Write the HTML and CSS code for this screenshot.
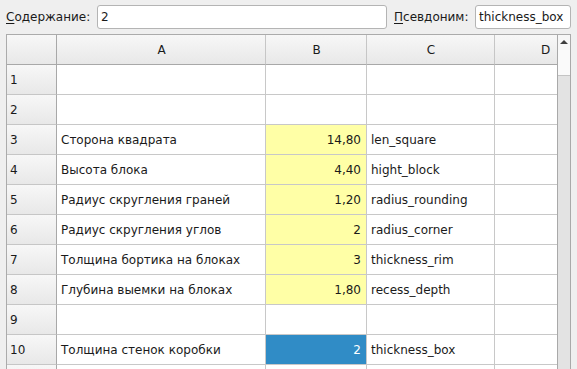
FILE: index.html
```html
<!DOCTYPE html>
<html>
<head>
<meta charset="utf-8">
<link rel="stylesheet" href="styles.css">
</head>
<body>
<div class="toolbar">
  <label class="lbl lbl-content"><u>С</u>одержание:</label>
  <div class="field field-content">2</div>
  <label class="lbl lbl-alias"><u>П</u>севдоним:</label>
  <div class="field field-alias">thickness_box</div>
</div>
<div class="sheet">
  <div class="grid">
    <div class="row head">
      <div class="cell corner"></div>
      <div class="cell colh">A</div>
      <div class="cell colh">B</div>
      <div class="cell colh">C</div>
      <div class="cell colh">D</div>
    </div>
    <div class="row"><div class="cell rowh">1</div><div class="cell"></div><div class="cell"></div><div class="cell"></div><div class="cell"></div></div>
    <div class="row"><div class="cell rowh">2</div><div class="cell"></div><div class="cell"></div><div class="cell"></div><div class="cell"></div></div>
    <div class="row"><div class="cell rowh">3</div><div class="cell">Сторона квадрата</div><div class="cell num alias">14,80</div><div class="cell">len_square</div><div class="cell"></div></div>
    <div class="row"><div class="cell rowh">4</div><div class="cell">Высота блока</div><div class="cell num alias">4,40</div><div class="cell">hight_block</div><div class="cell"></div></div>
    <div class="row"><div class="cell rowh">5</div><div class="cell">Радиус скругления граней</div><div class="cell num alias">1,20</div><div class="cell">radius_rounding</div><div class="cell"></div></div>
    <div class="row"><div class="cell rowh">6</div><div class="cell">Радиус скругления углов</div><div class="cell num alias">2</div><div class="cell">radius_corner</div><div class="cell"></div></div>
    <div class="row"><div class="cell rowh">7</div><div class="cell">Толщина бортика на блоках</div><div class="cell num alias">3</div><div class="cell">thickness_rim</div><div class="cell"></div></div>
    <div class="row"><div class="cell rowh">8</div><div class="cell">Глубина выемки на блоках</div><div class="cell num alias">1,80</div><div class="cell">recess_depth</div><div class="cell"></div></div>
    <div class="row"><div class="cell rowh">9</div><div class="cell"></div><div class="cell"></div><div class="cell"></div><div class="cell"></div></div>
    <div class="row"><div class="cell rowh">10</div><div class="cell">Толщина стенок коробки</div><div class="cell num selected">2</div><div class="cell">thickness_box</div><div class="cell"></div></div>
    <div class="row"><div class="cell rowh"></div><div class="cell"></div><div class="cell"></div><div class="cell"></div><div class="cell"></div></div>
  </div>
  <div class="vscroll">
    <div class="sb-up"><span class="arrow"></span></div>
    <div class="sb-thumb"></div>
    <div class="sb-track"></div>
  </div>
</div>
</body>
</html>
```
FILE: styles.css
```css
html, body {
  margin: 0;
  padding: 0;
  background: #efefef;
  overflow: hidden;
  width: 577px;
  height: 369px;
  font-family: "DejaVu Sans", sans-serif;
  font-size: 12px;
  color: #1a1a1a;
}
u { text-decoration: underline; text-underline-offset: 2px; }

.toolbar {
  display: flex;
  align-items: center;
  padding: 5px 6px 0 6px;
  height: 24px;
}
.lbl {
  flex: none;
  white-space: nowrap;
}
.lbl-content { width: 91px; }
.lbl-alias { width: 81px; margin-left: 7px; }
.field {
  box-sizing: border-box;
  height: 24px;
  background: #fff;
  border: 1px solid #b4b4b4;
  border-radius: 3px;
  padding: 0 3px;
  line-height: 22px;
  white-space: nowrap;
  overflow: hidden;
}
.field-content { flex: 1; }
.field-alias { width: 96px; flex: none; }

.sheet {
  display: flex;
  margin: 5px 6px 0 6px;
  height: 340px;
  border-top: 1px solid #ababab;
  border-left: 1px solid #ababab;
}
.grid {
  flex: 1;
  overflow: hidden;
  background: #fff;
}
.row {
  display: grid;
  grid-template-columns: 50px 209px 101px 128px 101px;
  height: 30px;
}
.cell {
  box-sizing: border-box;
  border-right: 1px solid #c8c8c8;
  border-bottom: 1px solid #c8c8c8;
  padding: 0 3px 0 4px;
  display: flex;
  align-items: center;
  white-space: nowrap;
  overflow: hidden;
  background: #fff;
}
.head .cell {
  background: linear-gradient(#f7f7f7, #e8e8e8);
  border-bottom: 1px solid #a8a8a8;
  border-right: 1px solid #c6c6c6;
  justify-content: center;
}
.head .corner { border-right: 1px solid #a8a8a8; }
.rowh {
  background: linear-gradient(#f7f7f7, #e8e8e8);
  border-right: 1px solid #a8a8a8;
  border-bottom: 1px solid #c6c6c6;
  padding-left: 3px;
}
.num { justify-content: flex-end; padding-right: 5px; }
.alias { background: #ffffa6; }
.selected { background: #308cc6; color: #fff; }

.vscroll {
  box-sizing: border-box;
  width: 14px;
  flex: none;
  display: flex;
  flex-direction: column;
  border-left: 1px solid #a9a9a9;
  border-right: 1px solid #a9a9a9;
  background: #e3e3e3;
}
.sb-up {
  height: 15px;
  background: #f6f6f6;
  display: flex;
  justify-content: center;
  padding-top: 5px;
  box-sizing: border-box;
}
.arrow {
  width: 0;
  height: 0;
  border-left: 4px solid transparent;
  border-right: 4px solid transparent;
  border-bottom: 4px solid #3c3c3c;
}
.sb-thumb {
  height: 25px;
  background: #fafafa;
  border-bottom: 1px solid #c4c4c4;
}
.sb-track { flex: 1; }
```
